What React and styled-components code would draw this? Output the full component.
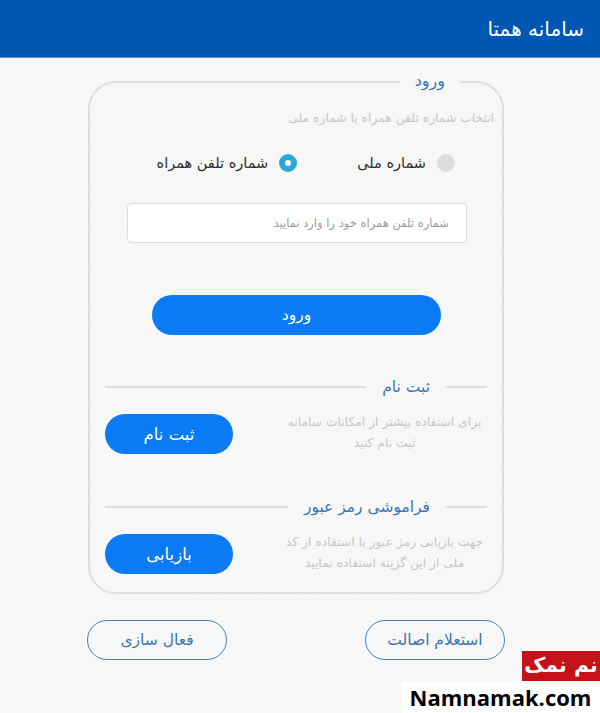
import React from 'react';
import styled, { createGlobalStyle } from 'styled-components';

const GlobalStyle = createGlobalStyle`
  html, body {
    margin: 0;
    padding: 0;
    height: 100%;
    background-color: #f7f7f7;
  }
  * {
    box-sizing: border-box;
  }
  ::placeholder {
    color: #9c9c9c;
    opacity: 1;
  }
`;

const Page = styled.div`
  position: relative;
  width: 600px;
  height: 713px;
  overflow: hidden;
  font-family: "DejaVu Sans", "Noto Sans", sans-serif;
  background-color: #f7f7f7;
  background-image: repeating-linear-gradient(
    135deg,
    #f6f6f6 0 1px,
    transparent 1px 14px
  );
`;

const Header = styled.header`
  height: 58px;
  display: flex;
  align-items: center;
  padding: 0 16px;
  background-color: #0057b3;
  border-bottom: 1px solid #4f9ad8;
  color: #fff;
  font-size: 20px;
`;

const Main = styled.main`
  padding: 12px 96px 0 88px;
`;

const Card = styled.fieldset`
  margin: 0;
  min-width: 0;
  width: 416px;
  padding: 0 0 18px;
  border: 2px solid #dedede;
  border-radius: 28px;
`;

const CardLegend = styled.legend`
  margin-right: 42px;
  padding: 0 15px;
  height: 24px;
  line-height: 22px;
  font-size: 16px;
  color: #3d75b0;
`;

const Hint = styled.p`
  margin: 14px 8px 0 0;
  line-height: 20px;
  font-size: 12.3px;
  color: #c6c6c6;
`;

const RadioRow = styled.div`
  display: flex;
  gap: 60px;
  margin-top: 23px;
  padding-right: 47px;
`;

const RadioOption = styled.label`
  display: flex;
  align-items: center;
  gap: 11px;
  height: 24px;
  font-size: 14.5px;
  color: #2c2c2c;
`;

const RadioDot = styled.span`
  width: 18px;
  height: 18px;
  flex: none;
  border-radius: 50%;
  background-color: ${props => (props.$checked ? '#fff' : '#dcdcdc')};
  border: ${props => (props.$checked ? '6px solid #2ba6d6' : 'none')};
`;

const PhoneInput = styled.input`
  display: block;
  width: 340px;
  height: 40px;
  margin: 28px 35px 0 0;
  padding: 0 17px;
  background-color: #fff;
  border: 1px solid #dcdcdc;
  border-radius: 4px;
  font-family: inherit;
  font-size: 11.5px;
`;

const SolidButton = styled.button`
  display: block;
  height: 40px;
  border: none;
  border-radius: 20px;
  background-color: #0a7bf5;
  color: #fff;
  font-family: inherit;
  font-size: 15.5px;
`;

const LoginButton = styled(SolidButton)`
  width: 289px;
  margin: 52px 61px 0 0;
`;

const SectionTitle = styled.div`
  display: flex;
  align-items: center;
  gap: 16px;
  height: 24px;
  margin-top: ${props => props.$top}px;
  padding: 0 15px;
  font-size: 15.5px;
  color: #3d75b0;

  &::before {
    content: '';
    width: 41px;
    height: 2px;
    background-color: #dedede;
  }

  &::after {
    content: '';
    flex: 1;
    height: 2px;
    background-color: #dedede;
  }
`;

const SectionRow = styled.div`
  display: flex;
  justify-content: space-between;
  align-items: center;
  height: 40px;
  margin-top: 15px;
  padding: 0 15px;
`;

const SectionText = styled.p`
  width: 205px;
  margin: 0 0 3px;
  text-align: center;
  line-height: 21px;
  font-size: 12.3px;
  color: #c6c6c6;
`;

const SectionButton = styled(SolidButton)`
  width: 128px;
  font-size: 16.5px;
`;

const Footer = styled.div`
  display: flex;
  justify-content: space-between;
  margin-top: 26px;
  padding: 0 95px 0 87px;
`;

const OutlineButton = styled.button`
  width: 140px;
  height: 40px;
  background: transparent;
  border: 1.5px solid #4b82b5;
  border-radius: 20px;
  color: #3d75b0;
  font-family: inherit;
  font-size: 15.5px;
`;

const Watermark = styled.div`
  position: absolute;
  right: 0;
  bottom: 0;
  display: flex;
  flex-direction: column;
  align-items: flex-end;
`;

const WatermarkBadge = styled.div`
  width: 78px;
  height: 30px;
  background-color: #c4121a;
  color: #fff;
  font-size: 20.5px;
  font-weight: bold;
  line-height: 28px;
  text-align: center;
  white-space: nowrap;
`;

const WatermarkSite = styled.div`
  width: 199px;
  height: 32px;
  background-color: #fff;
  color: #000;
  font-family: "Open Sans", sans-serif;
  font-size: 22px;
  font-weight: bold;
  line-height: 32px;
  text-align: center;
`;

export default function App() {
  return (
    <Page dir="rtl">
      <GlobalStyle />
      <Header>سامانه همتا</Header>
      <Main>
        <Card>
          <CardLegend>ورود</CardLegend>
          <Hint>انتخاب شماره تلفن همراه یا شماره ملی</Hint>
          <RadioRow>
            <RadioOption>
              <RadioDot />
              شماره ملی
            </RadioOption>
            <RadioOption>
              <RadioDot $checked />
              شماره تلفن همراه
            </RadioOption>
          </RadioRow>
          <PhoneInput placeholder="شماره تلفن همراه خود را وارد نمایید" />
          <LoginButton>ورود</LoginButton>
          <SectionTitle $top={40}>ثبت نام</SectionTitle>
          <SectionRow>
            <SectionText>برای استفاده بیشتر از امکانات سامانه ثبت نام کنید</SectionText>
            <SectionButton>ثبت نام</SectionButton>
          </SectionRow>
          <SectionTitle $top={41}>فراموشی رمز عبور</SectionTitle>
          <SectionRow>
            <SectionText>جهت بازیابی رمز عبور با استفاده از کد ملی از این گزینه استفاده نمایید</SectionText>
            <SectionButton>بازیابی</SectionButton>
          </SectionRow>
        </Card>
      </Main>
      <Footer>
        <OutlineButton>استعلام اصالت</OutlineButton>
        <OutlineButton>فعال سازی</OutlineButton>
      </Footer>
      <Watermark dir="ltr">
        <WatermarkBadge dir="rtl">نم نمک</WatermarkBadge>
        <WatermarkSite>Namnamak.com</WatermarkSite>
      </Watermark>
    </Page>
  );
}
